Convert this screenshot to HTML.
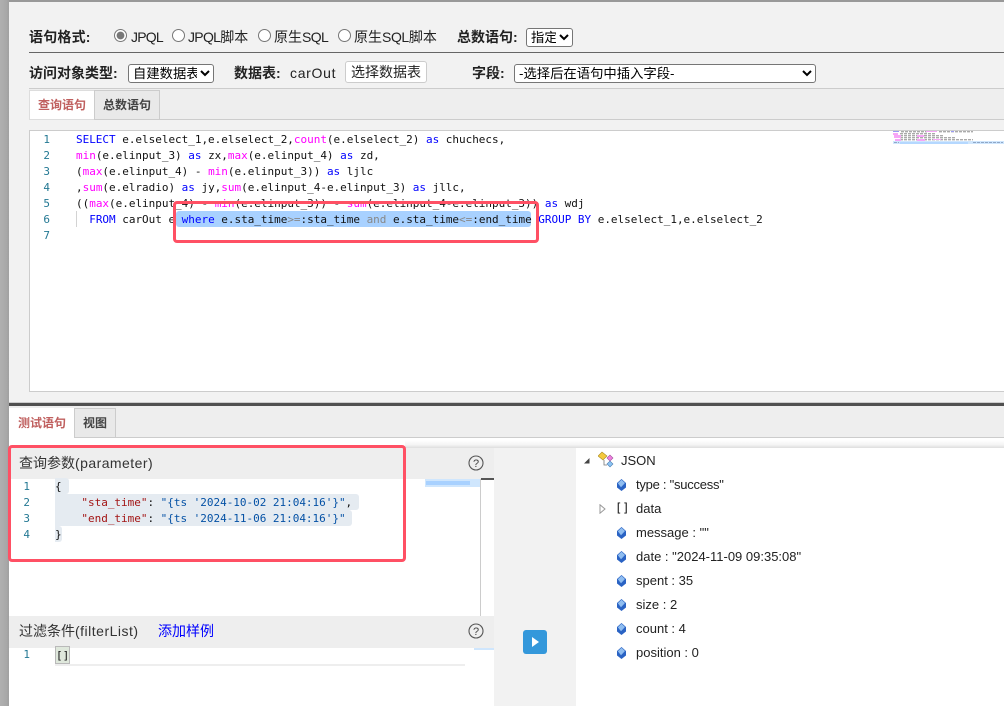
<!DOCTYPE html>
<html lang="zh"><head><meta charset="utf-8"><title>语句</title>
<style>
html,body{margin:0;padding:0;width:1004px;height:706px;overflow:hidden;background:#fff}
body{position:relative;font-family:"Liberation Sans","Noto Sans CJK SC",sans-serif;font-size:14px;color:#222}
.a{position:absolute;box-sizing:border-box}
.t{position:absolute;white-space:nowrap;line-height:20px}
.b{font-weight:bold;color:#222}
.tab{position:absolute;box-sizing:border-box;font-size:12px;font-weight:bold;text-align:center;color:#444;border:1px solid #ccc;background:#e9e9e9}
.tab.on{background:#fff;color:#c0605f;border-color:#ddd}
.m{position:absolute;white-space:pre;font-family:"DejaVu Sans Mono","Liberation Mono",monospace;font-size:11px;line-height:16px;color:#111;letter-spacing:-.02px}
.n{color:#237893;text-align:right;width:16px}
.k{color:#00f}.f{color:#f0f}.g{color:#888}
.s{color:#0451a5}.r{color:#a31515}
select{position:absolute;box-sizing:border-box;margin:0;font:13.33px "Liberation Sans","Noto Sans CJK SC",sans-serif;padding:0;background:#fff;border:1px solid #767676;border-radius:3px;color:#000}
input[type=radio]{position:absolute;margin:0;width:13px;height:13px;accent-color:#777}
.tree{position:absolute;font-size:13px;line-height:18px;white-space:nowrap;color:#222}
</style></head><body>
<div class="a" style="left:0;top:0;width:1004px;height:404px;background:#f2f2f2"></div>
<div class="a" style="left:0;top:0;width:1004px;height:2px;background:#999"></div>
<div class="a" style="left:0;top:0;width:9px;height:706px;background:linear-gradient(90deg,#b0b0b0,#a8a8a8 70%,#a0a0a0)"></div>

<div class="t b" style="left:29px;top:27px;letter-spacing:.2px">语句格式:</div>
<input type="radio" name="f" checked style="left:114px;top:29px">
<div class="t" style="left:131px;top:27px;letter-spacing:-.8px">JPQL</div>
<input type="radio" name="f" style="left:172px;top:29px">
<div class="t" style="left:188px;top:27px"><span style="letter-spacing:-.7px">JPQL</span>脚本</div>
<input type="radio" name="f" style="left:258px;top:29px">
<div class="t" style="left:274px;top:27px">原生<span style="letter-spacing:-.6px">SQL</span></div>
<input type="radio" name="f" style="left:338px;top:29px">
<div class="t" style="left:354px;top:27px">原生<span style="letter-spacing:-.4px">SQL</span>脚本</div>
<div class="t b" style="left:457px;top:27px">总数语句:</div>
<select style="left:526px;top:28px;width:47px;height:19px"><option>指定</option></select>
<div class="a" style="left:29px;top:52px;width:975px;height:1px;background:#666"></div>

<div class="t b" style="left:29px;top:63px">访问对象类型:</div>
<select style="left:128px;top:64px;width:86px;height:19px"><option>自建数据表</option></select>
<div class="t b" style="left:234px;top:63px">数据表:</div>
<div class="t" style="left:290px;top:63px;letter-spacing:.7px">carOut</div>
<div class="a" style="left:345px;top:61px;width:82px;height:22px;background:#fff;border:1px solid #ccc;border-radius:3px;text-align:center;line-height:20px">选择数据表</div>
<div class="t b" style="left:472px;top:63px">字段:</div>
<select style="left:514px;top:64px;width:302px;height:19px"><option>-选择后在语句中插入字段-</option></select>

<div class="a" style="left:29px;top:88px;width:975px;height:32px;background:#eee;border-top:1px solid #ccc;border-bottom:1px solid #ccc"></div>
<div class="tab on" style="left:29px;top:90px;width:66px;height:30px;line-height:29px">查询语句</div>
<div class="tab" style="left:94px;top:90px;width:66px;height:30px;line-height:29px">总数语句</div>

<div class="a" style="left:29px;top:130px;width:975px;height:262px;background:#fff;border:1px solid #ccc;border-right:0"></div>
<div class="a" style="left:176px;top:211px;width:355px;height:16px;background:#a8d1ff;border-radius:3px"></div>
<div class="a" style="left:76px;top:211px;width:1px;height:16px;background:#d3d3d3"></div>
<div class="m n" style="left:34px;top:132px">1
2
3
4
5
6
7</div>
<div class="m" style="left:76px;top:132px"><span class="k">SELECT</span> e.elselect_1,e.elselect_2,<span class="f">count</span>(e.elselect_2) <span class="k">as</span> chuchecs,
<span class="f">min</span>(e.elinput_3) <span class="k">as</span> zx,<span class="f">max</span>(e.elinput_4) <span class="k">as</span> zd,
(<span class="f">max</span>(e.elinput_4) - <span class="f">min</span>(e.elinput_3)) <span class="k">as</span> ljlc
,<span class="f">sum</span>(e.elradio) <span class="k">as</span> jy,<span class="f">sum</span>(e.elinput_4-e.elinput_3) <span class="k">as</span> jllc,
((<span class="f">max</span>(e.elinput_4) - <span class="f">min</span>(e.elinput_3)) - <span class="f">sum</span>(e.elinput_4-e.elinput_3)) <span class="k">as</span> wdj
  <span class="k">FROM</span> carOut e <span class="k">where</span> e.sta_time<span class="g">&gt;=</span>:sta_time <span class="g">and</span> e.sta_time<span class="g">&lt;=</span>:end_time <span class="k">GROUP BY</span> e.elselect_1,e.elselect_2</div>

<svg class="a" style="left:893px;top:131px" width="111" height="13" viewBox="0 0 111 13">
<g fill="none" stroke="#aaa" stroke-width="1.4" stroke-dasharray="3 1">
<path d="M8 .7H34M46 .7H80"/><path d="M7 2.7H42"/><path d="M7 4.7H50"/><path d="M7 6.7H62"/><path d="M7 8.7H80"/></g>
<g fill="#f7a6f7"><rect x="0" y="2" width="5" height="2"/><rect x="1" y="4" width="7" height="3"/><rect x="2" y="8" width="6" height="2"/><rect x="33" y="0" width="11" height="1"/><rect x="24" y="4" width="7" height="2"/><rect x="24" y="8" width="8" height="2"/><rect x="40" y="8" width="8" height="1"/></g>
<g fill="#9a9af5"><rect x="0" y="0" width="6" height="1"/><rect x="58" y="0" width="3" height="1"/><rect x="0" y="10" width="5" height="1"/></g>
<rect x="0" y="10" width="111" height="3" fill="#cfe6fd"/>
<rect x="7" y="11" width="68" height="2" fill="#b5d8ff"/>
<path d="M1 11.5H6M80 11.5H110" stroke="#8fa7c7" stroke-dasharray="3 1"/>
</svg>

<div class="a" style="left:9px;top:402px;width:995px;height:1px;background:#ccc"></div>
<div class="a" style="left:9px;top:403px;width:995px;height:3px;background:#505050"></div>
<div class="a" style="left:9px;top:406px;width:995px;height:32px;background:#eee;border-bottom:1px solid #ccc"></div>
<div class="tab on" style="left:9px;top:408px;width:66px;height:30px;line-height:29px;border-color:#fff">测试语句</div>
<div class="tab" style="left:74px;top:408px;width:42px;height:30px;line-height:29px">视图</div>

<div class="a" style="left:405px;top:440px;width:599px;height:8px;background:linear-gradient(#fff,#f4f4f4 60%,#ddd)"></div>
<div class="a" style="left:494px;top:448px;width:82px;height:258px;background:#f2f2f2"></div>

<div class="a" style="left:9px;top:448px;width:485px;height:31px;background:#eee"></div>
<div class="t" style="left:19px;top:453px;color:#333">查询参数<span style="letter-spacing:.45px">(parameter)</span></div>
<svg class="a" style="left:468px;top:455px" width="16" height="16" viewBox="0 0 16 16"><circle cx="8" cy="8" r="7" fill="none" stroke="#555" stroke-width="1.1"/><text x="8" y="12" font-size="11" text-anchor="middle" fill="#444" font-family="Liberation Sans">?</text></svg>

<div class="a" style="left:425px;top:479px;width:55px;height:8px;background:#cfe6fd"></div>
<div class="a" style="left:426px;top:481px;width:44px;height:4px;background:#a8d1ff"></div>
<div class="a" style="left:480px;top:479px;width:1px;height:137px;background:#ccc"></div>
<div class="a" style="left:481px;top:478px;width:13px;height:2px;background:#555"></div>

<div class="a" style="left:55px;top:478px;width:14px;height:16px;background:#e5ebf1;border-radius:0 3px 3px 0"></div>
<div class="a" style="left:55px;top:494px;width:304px;height:16px;background:#e5ebf1;border-radius:0 3px 3px 0"></div>
<div class="a" style="left:55px;top:510px;width:297px;height:16px;background:#e5ebf1;border-radius:0 3px 3px 0"></div>
<div class="a" style="left:55px;top:526px;width:7px;height:16px;background:#e5ebf1;border-radius:0 3px 3px 0"></div>
<div class="m n" style="left:14px;top:479px">1
2
3
4</div>
<div class="m" style="left:55px;top:479px">{
    <span class="r">"sta_time"</span>: <span class="s">"{ts '2024-10-02 21:04:16'}"</span>,
    <span class="r">"end_time"</span>: <span class="s">"{ts '2024-11-06 21:04:16'}"</span>
}</div>

<div class="a" style="left:9px;top:616px;width:485px;height:32px;background:#eee"></div>
<div class="t" style="left:19px;top:621px;color:#333">过滤条件<span style="letter-spacing:.5px">(filterList)</span></div>
<div class="t" style="left:158px;top:621px;color:#00f">添加样例</div>
<svg class="a" style="left:468px;top:623px" width="16" height="16" viewBox="0 0 16 16"><circle cx="8" cy="8" r="7" fill="none" stroke="#555" stroke-width="1.1"/><text x="8" y="12" font-size="11" text-anchor="middle" fill="#444" font-family="Liberation Sans">?</text></svg>
<div class="a" style="left:474px;top:648px;width:20px;height:2px;background:#cfe6fd"></div>
<div class="a" style="left:55px;top:664px;width:410px;height:2px;background:#eee"></div>
<div class="a" style="left:55px;top:646px;width:15px;height:18px;background:#dfe8dc;border:1px solid #b9b9b9"></div>
<div class="m n" style="left:14px;top:647px">1</div>
<div class="m" style="left:56px;top:648px">[]</div>

<svg class="a" style="left:523px;top:630px" width="24" height="24" viewBox="0 0 24 24"><rect width="24" height="24" rx="3" fill="#3498db"/><path d="M9 7l7 5-7 5z" fill="#fff"/></svg>

<svg class="a" style="left:583px;top:457px" width="8" height="8" viewBox="0 0 8 8"><path d="M6.5 1v5.5H1z" fill="#444"/></svg>
<svg class="a" style="left:598px;top:451px" width="18" height="18" viewBox="0 0 18 18">
<path d="M0 5l4-4 5 4-4 4z" fill="#f4c93e" stroke="#a98a20" stroke-width=".6"/>
<path d="M9 7l3-3 3 3-3 3z" fill="#ef7fe0" stroke="#a0509a" stroke-width=".6"/>
<path d="M9 13l3-3 3 3-3 3z" fill="#8cc4f5" stroke="#4b7cae" stroke-width=".6"/>
<path d="M6 9v5h3" fill="none" stroke="#777" stroke-width=".8"/></svg>
<div class="tree" style="left:621px;top:452px">JSON</div>

<svg class="a" style="left:617px;top:479px" width="9" height="12" viewBox="0 0 9 12"><path d="M4.5 0L9 4v4.5L4.5 12 0 8.5V4z" fill="#2a63c4"/><path d="M4.5 .8L.8 4.2 4 8.2 8 4z" fill="#8fbdf0"/></svg>
<div class="tree" style="left:636px;top:476px;letter-spacing:-.25px">type : "success"</div>
<svg class="a" style="left:599px;top:504px" width="7" height="10" viewBox="0 0 7 10"><path d="M1 .8l5 4.2-5 4.2z" fill="#fff" stroke="#999"/></svg>
<div class="m" style="left:615px;top:500px;font-size:12px">[]</div>
<div class="tree" style="left:636px;top:500px">data</div>
<svg class="a" style="left:617px;top:527px" width="9" height="12" viewBox="0 0 9 12"><path d="M4.5 0L9 4v4.5L4.5 12 0 8.5V4z" fill="#2a63c4"/><path d="M4.5 .8L.8 4.2 4 8.2 8 4z" fill="#8fbdf0"/></svg>
<div class="tree" style="left:636px;top:524px">message : ""</div>
<svg class="a" style="left:617px;top:551px" width="9" height="12" viewBox="0 0 9 12"><path d="M4.5 0L9 4v4.5L4.5 12 0 8.5V4z" fill="#2a63c4"/><path d="M4.5 .8L.8 4.2 4 8.2 8 4z" fill="#8fbdf0"/></svg>
<div class="tree" style="left:636px;top:548px">date : "2024-11-09 09:35:08"</div>
<svg class="a" style="left:617px;top:575px" width="9" height="12" viewBox="0 0 9 12"><path d="M4.5 0L9 4v4.5L4.5 12 0 8.5V4z" fill="#2a63c4"/><path d="M4.5 .8L.8 4.2 4 8.2 8 4z" fill="#8fbdf0"/></svg>
<div class="tree" style="left:636px;top:572px">spent : 35</div>
<svg class="a" style="left:617px;top:599px" width="9" height="12" viewBox="0 0 9 12"><path d="M4.5 0L9 4v4.5L4.5 12 0 8.5V4z" fill="#2a63c4"/><path d="M4.5 .8L.8 4.2 4 8.2 8 4z" fill="#8fbdf0"/></svg>
<div class="tree" style="left:636px;top:596px">size : 2</div>
<svg class="a" style="left:617px;top:623px" width="9" height="12" viewBox="0 0 9 12"><path d="M4.5 0L9 4v4.5L4.5 12 0 8.5V4z" fill="#2a63c4"/><path d="M4.5 .8L.8 4.2 4 8.2 8 4z" fill="#8fbdf0"/></svg>
<div class="tree" style="left:636px;top:620px">count : 4</div>
<svg class="a" style="left:617px;top:647px" width="9" height="12" viewBox="0 0 9 12"><path d="M4.5 0L9 4v4.5L4.5 12 0 8.5V4z" fill="#2a63c4"/><path d="M4.5 .8L.8 4.2 4 8.2 8 4z" fill="#8fbdf0"/></svg>
<div class="tree" style="left:636px;top:644px">position : 0</div>

<div class="a" style="left:173px;top:201px;width:366px;height:42px;border:3px solid #ff5064;border-radius:4px"></div>
<div class="a" style="left:8px;top:445px;width:398px;height:117px;border:3px solid #ff5064;border-radius:4px"></div>
</body></html>
